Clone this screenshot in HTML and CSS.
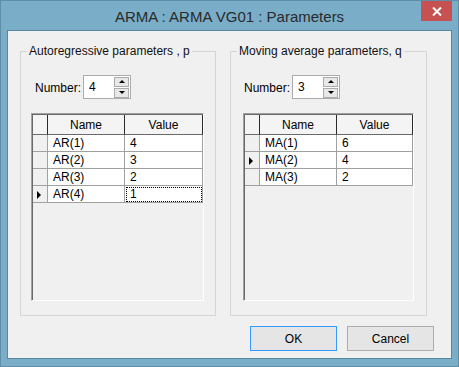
FILE: index.html
```html
<!DOCTYPE html>
<html lang="en">
  <head>
    <meta charset="UTF-8" />
    <title>ARMA : ARMA VG01 : Parameters</title>
    <link rel="stylesheet" href="styles.css">
  </head>
  <body>
    <div class="window">
      <div class="titlebar">
        <span class="title">ARMA : ARMA VG01 : Parameters</span>
        <div class="close">
          <svg width="10" height="9" viewBox="0 0 10 9">
            <path d="M1 0.5 L9 8.5 M9 0.5 L1 8.5" stroke="#fff" stroke-width="2" />
          </svg>
        </div>
      </div>

      <div class="client">
        <div class="panels">
          <fieldset class="group group-left">
            <legend>Autoregressive parameters , p</legend>
            <div class="spin-row">
              <label for="arNumber">Number:</label>
              <div class="spin">
                <input id="arNumber" value="4" />
                <div class="spin-buttons">
                  <div class="spin-btn"><span class="arrow-up"></span></div>
                  <div class="spin-btn"><span class="arrow-down"></span></div>
                </div>
              </div>
            </div>
            <div class="grid">
              <table>
                <colgroup>
                  <col class="c-head" /><col class="c-name" /><col />
                </colgroup>
                <tr class="head">
                  <th></th><th>Name</th><th>Value</th>
                </tr>
                <tr><td class="rh"></td><td>AR(1)</td><td>4</td></tr>
                <tr><td class="rh"></td><td>AR(2)</td><td>3</td></tr>
                <tr><td class="rh"></td><td>AR(3)</td><td>2</td></tr>
                <tr>
                  <td class="rh"><span class="current"></span></td>
                  <td>AR(4)</td><td class="focus">1</td>
                </tr>
              </table>
            </div>
          </fieldset>

          <fieldset class="group group-right">
            <legend>Moving average parameters, q</legend>
            <div class="spin-row">
              <label for="maNumber">Number:</label>
              <div class="spin">
                <input id="maNumber" value="3" />
                <div class="spin-buttons">
                  <div class="spin-btn"><span class="arrow-up"></span></div>
                  <div class="spin-btn"><span class="arrow-down"></span></div>
                </div>
              </div>
            </div>
            <div class="grid">
              <table>
                <colgroup>
                  <col class="c-head" /><col class="c-name" /><col />
                </colgroup>
                <tr class="head">
                  <th></th><th>Name</th><th>Value</th>
                </tr>
                <tr><td class="rh"></td><td>MA(1)</td><td>6</td></tr>
                <tr>
                  <td class="rh"><span class="current"></span></td>
                  <td>MA(2)</td><td>4</td>
                </tr>
                <tr><td class="rh"></td><td>MA(3)</td><td>2</td></tr>
              </table>
            </div>
          </fieldset>
        </div>

        <div class="actions">
          <button class="btn btn-default">OK</button>
          <button class="btn">Cancel</button>
        </div>
      </div>
    </div>
  </body>
</html>
```

FILE: styles.css
```css
body {
  margin: 0;
  font-family: "Liberation Sans", Arial, sans-serif;
  font-size: 12px;
  color: #000;
}
.window {
  position: relative;
  width: 459px;
  height: 367px;
  box-sizing: border-box;
  background-color: #7aadc8;
  border: 1px solid #5f8ea8;
  padding: 0 6px 7px;
  display: flex;
  flex-direction: column;
}
.titlebar {
  height: 29px;
  display: flex;
  align-items: center;
  justify-content: center;
}
.title {
  font-size: 15px;
  color: #2a2a2a;
  margin-top: 1px;
}
.close {
  position: absolute;
  top: 0;
  right: 6px;
  width: 31px;
  height: 20px;
  background-color: #c75050;
  display: flex;
  align-items: center;
  justify-content: center;
}
.client {
  flex: 1;
  background-color: #f0f0f0;
  border: 1px solid #5a87a0;
  padding: 13px 17px 0 12px;
}
.panels {
  display: flex;
  gap: 14px;
}
.group {
  margin: 0;
  border: 1px solid #d5d5d5;
  padding: 17px 11px 14px 0;
  box-sizing: border-box;
}
.group-left {
  width: 196px;
}
.group-right {
  width: 197px;
  padding-right: 12px;
}
.group legend {
  padding: 0 2px;
  margin-left: 6px;
  line-height: 14px;
  white-space: nowrap;
  color: #111;
}
.spin-row {
  display: flex;
  align-items: center;
  gap: 2px;
  margin-left: 14px;
  margin-bottom: 14px;
}
.group-right .spin-row {
  margin-left: 13px;
}
.spin-row label {
  padding-top: 1px;
}
.spin {
  width: 48px;
  height: 24px;
  box-sizing: border-box;
  background-color: white;
  border: 1px solid #ababab;
  display: flex;
  align-items: center;
}
.spin input {
  width: 24px;
  border: none;
  padding: 0 0 0 5px;
  font-family: inherit;
  font-size: 12px;
  background: transparent;
  outline: none;
}
.spin-buttons {
  margin-left: auto;
  margin-right: 1px;
  display: flex;
  flex-direction: column;
  gap: 1px;
}
.spin-btn {
  width: 15px;
  height: 10px;
  box-sizing: border-box;
  border: 1px solid #acacac;
  background-color: #e8e8e8;
  display: flex;
  align-items: center;
  justify-content: center;
}
.arrow-up {
  border-left: 3px solid transparent;
  border-right: 3px solid transparent;
  border-bottom: 3px solid #000;
}
.arrow-down {
  border-left: 3px solid transparent;
  border-right: 3px solid transparent;
  border-top: 3px solid #000;
}
.grid {
  height: 188px;
  margin-left: 10px;
  box-sizing: border-box;
  background-color: #f0f0f0;
  border-top: 1px solid #a0a0a0;
  border-left: 1px solid #a0a0a0;
  border-right: 1px solid #fff;
  border-bottom: 1px solid #fff;
  box-shadow: inset 1px 1px 0 #696969;
  padding: 1px 0 0 1px;
}
.group-right .grid {
  margin-left: 12px;
}
.grid table {
  width: 100%;
  table-layout: fixed;
  border-collapse: separate;
  border-spacing: 0;
}
.c-head {
  width: 15px;
}
.c-name {
  width: 77px;
}
.grid th {
  height: 19px;
  padding: 0;
  font-weight: normal;
  text-align: center;
  background-color: #f4f4f4;
  border-right: 1px solid #2a2a2a;
  border-bottom: 1px solid #6a6a6a;
}
.grid td {
  height: 16px;
  padding: 0 0 0 5px;
  background-color: white;
  border-right: 1px solid #a0a0a0;
  border-bottom: 1px solid #a0a0a0;
  white-space: nowrap;
}
.grid td.rh {
  padding: 0;
  background-color: #f0f0f0;
  text-align: center;
}
.grid td.focus {
  outline: 1px dotted #000;
  outline-offset: -2px;
}
.current {
  display: inline-block;
  vertical-align: middle;
  border-top: 4px solid transparent;
  border-bottom: 4px solid transparent;
  border-left: 4px solid #000;
  margin-left: -2px;
}
.actions {
  display: flex;
  justify-content: flex-end;
  gap: 10px;
  margin-top: 10px;
}
.btn {
  width: 87px;
  height: 25px;
  font-family: inherit;
  font-size: 12px;
  color: #000;
  background-color: #e5e5e5;
  border: 1px solid #adadad;
  padding: 0;
}
.btn-default {
  border-color: #3399ff;
}
```
